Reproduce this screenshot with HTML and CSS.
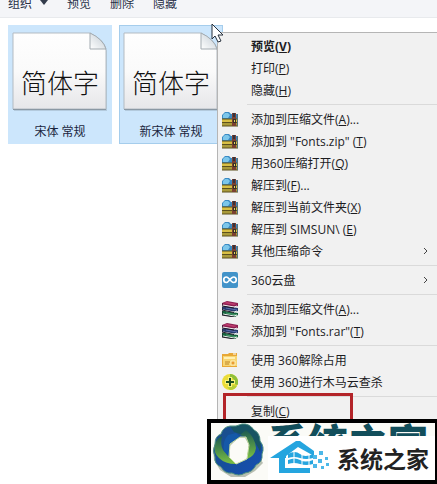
FILE: index.html
```html
<!DOCTYPE html>
<html lang="zh-CN">

<head>
    <title>Fonts</title>
    <meta charset="utf-8" />
    <link rel="stylesheet" href="styles.css">
</head>

<body>

    <!-- 图标 -->
    <svg class="defs" aria-hidden="true">
        <defs>
            <linearGradient id="paper" x1="0" y1="0" x2="0" y2="1">
                <stop offset="0" stop-color="#fefefe" />
                <stop offset="0.5" stop-color="#fafafa" />
                <stop offset="1" stop-color="#e6e6e9" />
            </linearGradient>
            <linearGradient id="fold" x1="0" y1="1" x2="1" y2="0">
                <stop offset="0" stop-color="#fff" />
                <stop offset="1" stop-color="#bfc9d1" />
            </linearGradient>
            <linearGradient id="ring" x1="0" y1="0" x2="1" y2="1">
                <stop offset="0" stop-color="#1c4f86" />
                <stop offset="0.5" stop-color="#164f9c" />
                <stop offset="1" stop-color="#174db5" />
            </linearGradient>
            <linearGradient id="leaf" x1="0" y1="0" x2="0" y2="1">
                <stop offset="0" stop-color="#1c5a52" />
                <stop offset="1" stop-color="#7cc142" />
            </linearGradient>
        </defs>
        <symbol id="page" viewBox="0 0 96 80">
            <path d="M2 2H80Q94 9 95 19V79H2Z" fill="#000" opacity="0.12" />
            <path d="M1 1H78Q92 8 94 18V77H1Z" fill="url(#paper)" stroke="#b3bbc2" />
            <path d="M78 1V17H94Q91 7 78 1Z" fill="url(#fold)" stroke="#a3abb1" />
            <path d="M1 77.500H94" stroke="#8a98a4" />
        </symbol>
        <symbol id="zip" viewBox="0 0 16 16">
            <path d="M0 4L3 1H7L9 3H16V9H0Z" fill="#3a8ac4" />
            <path d="M1 4L3 2H6L8 4L6 7H1Z" fill="#7cc6ea" />
            <path d="M0 8H16V11H0Z" fill="#d8bf45" />
            <path d="M0 11H16V15H0Z" fill="#a99a3a" />
            <path d="M0 8H16M0 11.500H16M0 15H16" stroke="#5c511d" />
            <path d="M10 2H14V15H10Z" fill="#7b4030" />
            <path d="M11 2H13V6H11Z" fill="#35323d" />
            <path d="M11 8H14V12H11Z" fill="#353128" />
            <path d="M12 9H13V11H12Z" fill="#e8cf66" />
            <path d="M15.500 3V15" stroke="#57737c" />
        </symbol>
        <symbol id="cloud" viewBox="0 0 16 16">
            <rect width="16" height="16" rx="2" fill="#4293c9" />
            <path d="M8 8C6.500 6 5.500 5 4.500 5A2.600 2.600 0 0 0 4.500 10.500C6.500 10.500 9 5 11.500 5A2.600 2.600 0 0 1 11.500 10.500C10.500 10.500 9.500 9.500 8 8"
                fill="none" stroke="#fff" stroke-width="1.700" />
        </symbol>
        <symbol id="rar" viewBox="0 0 16 16">
            <path d="M0 2L5 0L16 2V5L13 6L0 4Z" fill="#8c2050" />
            <path d="M1 2L5 1L15 3L12 4Z" fill="#c03e70" />
            <path d="M0 6L3 5L16 7V10L13 11L0 9Z" fill="#273c6e" />
            <path d="M4 7L15 9" stroke="#5e6fb0" />
            <path d="M0 10L3 10L16 12V14L13 16L0 14Z" fill="#17643f" />
            <path d="M4 12L15 14" stroke="#4da06f" />
            <path d="M1 4L12 6L15 5M1 9L12 11L15 10M1 13L12 15L15 14" stroke="#eee" fill="none" />
            <path d="M0 2V5L12 7M0 6V9L12 11.500M0 10V14L12 16" stroke="#211a28" fill="none" />
        </symbol>
        <symbol id="unlock" viewBox="0 0 16 16">
            <path d="M0 2H6L7 1H15V15H0Z" fill="#e8a736" />
            <path d="M1 4H15V14H1Z" fill="#f7d571" />
            <path d="M2 5H13V7H2Z" fill="#fff0b5" />
            <path d="M3 10H8M3 12H7" stroke="#be852b" />
            <path d="M9 9H13V13H9Z" fill="#e99d32" stroke="#fff2bd" />
            <path d="M11 2H14" stroke="#fff" />
        </symbol>
        <symbol id="scan" viewBox="0 0 16 16">
            <circle cx="8" cy="8" r="8" fill="#eadc39" />
            <path d="M8 0A8 8 0 0 1 15.500 11L12 10A5 5 0 0 0 8 3Z" fill="#8fc03a" />
            <path d="M8 16A8 8 0 0 0 15 12L11 11A5 5 0 0 1 5 13Z" fill="#b5cf35" />
            <path d="M8 3V13M3 8H13" stroke="#f8f27a" stroke-width="4" />
            <path d="M8 4V12M4 8H12" stroke="#1c5021" stroke-width="2" />
        </symbol>
    </svg>

    <div class="toolbar">
        <button class="tool" type="button">组织
            <svg class="caret" viewBox="0 0 8 5"><path d="M0 0H8L4 5Z" fill="#333c4c" /></svg>
        </button>
        <button class="tool" type="button">预览</button>
        <button class="tool" type="button">删除</button>
        <button class="tool" type="button">隐藏</button>
    </div>

    <div class="files">
        <a class="file" href="#">
            <span class="thumb">
                <svg class="paper"><use href="#page" /></svg>
                <span class="sample">简体字</span>
            </span>
            <span class="name">宋体 常规</span>
        </a>
        <a class="file active" href="#">
            <span class="thumb">
                <svg class="paper"><use href="#page" /></svg>
                <span class="sample">简体字</span>
            </span>
            <span class="name">新宋体 常规</span>
        </a>
    </div>

    <!-- 右键菜单 -->
    <div class="menu">
        <button class="item default" type="button"><span>预览(<u>V</u>)</span></button>
        <button class="item" type="button"><span>打印(<u>P</u>)</span></button>
        <button class="item" type="button"><span>隐藏(<u>H</u>)</span></button>
        <hr>
        <button class="item" type="button"><svg class="icon"><use href="#zip" /></svg><span>添加到压缩文件(<u>A</u>)...</span></button>
        <button class="item" type="button"><svg class="icon"><use href="#zip" /></svg><span>添加到 "Fonts.zip" (<u>T</u>)</span></button>
        <button class="item" type="button"><svg class="icon"><use href="#zip" /></svg><span>用360压缩打开(<u>Q</u>)</span></button>
        <button class="item" type="button"><svg class="icon"><use href="#zip" /></svg><span>解压到(<u>F</u>)...</span></button>
        <button class="item" type="button"><svg class="icon"><use href="#zip" /></svg><span>解压到当前文件夹(<u>X</u>)</span></button>
        <button class="item" type="button"><svg class="icon"><use href="#zip" /></svg><span>解压到 SIMSUN\ (<u>E</u>)</span></button>
        <button class="item" type="button"><svg class="icon"><use href="#zip" /></svg><span>其他压缩命令</span>
            <svg class="more" viewBox="0 0 5 8"><path d="M1 1L4 4L1 7" /></svg></button>
        <hr>
        <button class="item" type="button"><svg class="icon"><use href="#cloud" /></svg><span>360云盘</span>
            <svg class="more" viewBox="0 0 5 8"><path d="M1 1L4 4L1 7" /></svg></button>
        <hr>
        <button class="item" type="button"><svg class="icon"><use href="#rar" /></svg><span>添加到压缩文件(<u>A</u>)...</span></button>
        <button class="item" type="button"><svg class="icon"><use href="#rar" /></svg><span>添加到 "Fonts.rar"(<u>T</u>)</span></button>
        <hr>
        <button class="item" type="button"><svg class="icon"><use href="#unlock" /></svg><span>使用 360解除占用</span></button>
        <button class="item" type="button"><svg class="icon"><use href="#scan" /></svg><span>使用 360进行木马云查杀</span></button>
        <hr>
        <button class="item marked" type="button"><span>复制(<u>C</u>)</span></button>
    </div>

    <svg class="cursor" viewBox="0 0 13 20">
        <path d="M1 1V16L4 13L7 19L10 18L7 12H12Z" fill="#fff" stroke="#26303c" />
    </svg>

    <!-- 系统之家 logo -->
    <div class="logo">
        <svg class="ring" viewBox="0 0 56 56">
            <path fill-rule="evenodd" fill="#b9bfb2"
                d="M15 5L10 13L2 25L3 37L9 47L20 54L34 54L44 48L52 40L30 4ZM27 15L19 23V36L26 42L36 35L38 22L34 15Z" />
            <path fill-rule="evenodd" fill="url(#ring)"
                d="M19 3Q25 4 31 1Q38 0 43 7Q49 10 49 18Q54 24 51 31Q52 39 45 42Q42 49 34 50Q28 54 21 50Q14 51 10 44Q3 41 4 34Q1 28 4 21Q4 13 10 11Q12 4 19 3ZM29 14L19 21L18 34L25 41L36 36L38 22L35 14Z" />
            <path d="M31 1Q39 0 43 7Q49 10 49 18Q51 24 49 29Q46 20 38 14L23 9Q20 5 19 3Q26 4 31 1Z" fill="#175463" />
            <path d="M35 7Q44 14 45 25Q44 33 36 36L38 22L35 14L29 12Z" fill="url(#leaf)" />
            <path d="M4 21Q6 15 11 13Q9 22 12 27L18 34L25 41Q14 41 8 35Q2 30 4 21Z" fill="url(#leaf)" />
            <path d="M29 14L19 21L18 34L13 28Q11 19 17 12L25 10Z" fill="#1559a8" />
            <path d="M19 3Q25 4 31 1Q38 0 43 7Q49 10 49 18Q54 24 51 31Q52 39 45 42Q42 49 34 50Q28 54 21 50Q14 51 10 44Q3 41 4 34Q1 28 4 21Q4 13 10 11Q12 4 19 3Z" fill="none" stroke="#4f917f" />
            <path d="M29 14L19 21L18 34L25 41L36 36L38 22L35 14Z" fill="none" stroke="#c9dfa0" />
        </svg>
        <span class="shade">系统之家</span>
        <div class="brand">
            <svg class="house" viewBox="0 0 60 36">
                <path d="M0 18L26 1H30L44 11V16L28 7L16 16V18Z" fill="#25a5df" />
                <path d="M9 16H15V28H40V33H9Z" fill="#25a5df" />
                <path d="M18 14Q25 10 30 14T43 14V18Q36 20 30 18T18 18ZM18 20Q25 17 30 20T43 20V24Q36 26 30 24T18 24Z" fill="#25a5df" />
                <path d="M24 12V26M32 12V26M39 14V26" stroke="#fff" />
                <path d="M43 15H47V19H43ZM49 11H53V15H49ZM48 19H52V23H48ZM55 17H58V20H55ZM43 24H47V28H43ZM51 26H54V29H51ZM56 23H59V26H56Z" fill="#4cb8e8" />
            </svg>
            <span class="title">系统之家</span>
        </div>
    </div>

</body>

</html>
```

FILE: styles.css
```css
* {
    box-sizing: border-box;
}

body {
    margin: 0;
    min-height: 100vh;
    position: relative;
    overflow: hidden;
    background-color: #fff;
    color: #1c1c1f;
    font-family: "Open Sans", "Noto Sans CJK SC", sans-serif;
    font-size: 12px;
}

button {
    border: 0;
    padding: 0;
    background: none;
    color: inherit;
    font: inherit;
}

.defs {
    position: absolute;
    width: 0;
    height: 0;
}

/* 工具栏 */
.toolbar {
    display: flex;
    align-items: center;
    gap: 19px;
    height: 30px;
    margin-top: -12px;
    padding-left: 8px;
    background-color: #f4f5f8;
    border-bottom: 1px solid #e8eaed;
    color: #273047;
}

.tool {
    display: flex;
    align-items: center;
    gap: 8px;
}

.caret {
    width: 8px;
    height: 5px;
}

/* 文件 */
.files {
    display: flex;
    gap: 7px;
    padding: 7px 8px;
}

.file {
    width: 104px;
    height: 119px;
    padding: 6px 4px;
    display: flex;
    flex-direction: column;
    align-items: center;
    gap: 11px;
    background-color: #cce6fc;
    border: 1px solid #cce6fc;
    color: #1b2640;
    text-decoration: none;
}

.active {
    border-color: #a5cdec;
}

.thumb {
    display: grid;
    width: 96px;
    height: 80px;
}

.paper,
.sample {
    grid-area: 1 / 1;
}

.paper {
    width: 96px;
    height: 80px;
}

.sample {
    padding-top: 32px;
    text-align: center;
    font-family: "Noto Sans CJK SC", sans-serif;
    font-size: 26px;
    font-weight: 300;
    line-height: 36px;
    color: #111;
}

.name {
    line-height: 18px;
}

/* 菜单 */
.menu {
    position: absolute;
    top: 32px;
    left: 217px;
    right: 0;
    bottom: 0;
    padding-top: 2px;
    background-color: #f1f1f1;
    border-top: 1px solid #b5b5b5;
    border-left: 1px solid #b5b5b5;
}

.menu hr {
    height: 1px;
    margin: 3px 0 3px 29px;
    border: 0;
    background-color: #dadada;
}

.item {
    display: grid;
    grid-template-columns: 16px 1fr 5px;
    column-gap: 13px;
    align-items: center;
    width: 100%;
    height: 22px;
    padding: 0 9px 0 4px;
    text-align: left;
    white-space: nowrap;
}

.item span {
    grid-column: 2;
}

.item u {
    text-underline-offset: 1px;
}

.default {
    font-weight: bold;
}

.icon {
    width: 16px;
    height: 16px;
}

.more {
    width: 5px;
    height: 8px;
    fill: none;
    stroke: #444;
}

.marked {
    position: relative;
}

.marked::after {
    content: "";
    position: absolute;
    top: -7px;
    left: 5px;
    width: 124px;
    height: 60px;
    border: 3px solid #b32429;
}

.cursor {
    position: absolute;
    top: 23px;
    left: 211px;
    width: 13px;
    height: 20px;
}

/* logo */
.logo {
    position: absolute;
    left: 207px;
    right: 0;
    bottom: 0;
    height: 65px;
    display: grid;
    grid-template-columns: 57px 1fr;
    background-color: #fbfbf7;
    border: 4px solid #000;
    border-right-width: 2px;
    overflow: hidden;
}

.ring {
    width: 56px;
    height: 56px;
}

.shade,
.brand {
    grid-row: 1;
    grid-column: 2;
}

.shade {
    font-family: "Noto Sans CJK SC", sans-serif;
    font-size: 40px;
    font-weight: 900;
    line-height: 36px;
    white-space: nowrap;
    color: #124e5b;
}

.brand {
    display: flex;
    align-items: center;
    gap: 7px;
    margin-top: 13px;
    padding-left: 2px;
    background-color: #fff;
    z-index: 1;
}

.house {
    width: 60px;
    height: 36px;
}

.title {
    font-family: "Noto Sans CJK SC", sans-serif;
    font-size: 23px;
    font-weight: bold;
    white-space: nowrap;
    color: #222;
}
```
